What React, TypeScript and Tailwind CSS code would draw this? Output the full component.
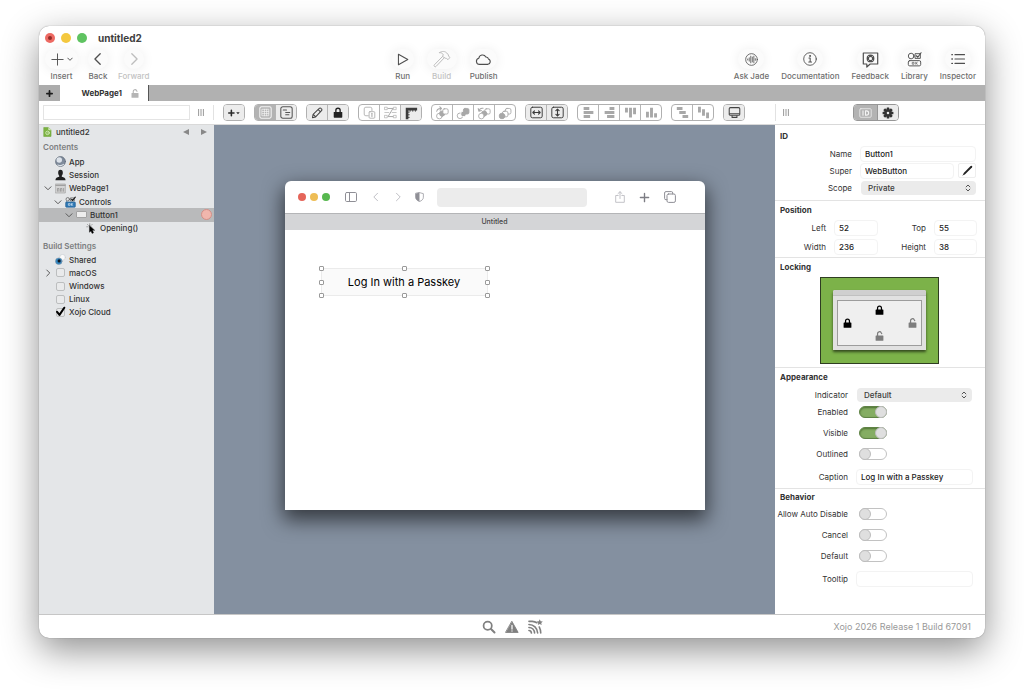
import { useState } from 'react';
import type { ReactNode } from 'react';
import clsx from 'clsx';

interface IconProps {
  className?: string;
}

interface SvgProps extends IconProps {
  box?: string;
  children: ReactNode;
}

function Svg({ box = '0 0 16 16', className, children }: SvgProps) {
  return (
    <svg
      viewBox={box}
      className={className}
      fill="none"
      stroke="currentColor"
      strokeLinecap="round"
      strokeLinejoin="round"
      aria-hidden="true"
    >
      {children}
    </svg>
  );
}

function LockIcon({ open, className }: IconProps & { open?: boolean }) {
  return (
    <Svg box="0 0 16 18" className={className}>
      <rect x="1" y="8" width="14" height="9.5" rx="1" fill="currentColor" stroke="none" />
      <path
        d={open ? 'M4.5 9V5a3.5 3.5 0 0 1 6.6-1.8L12 4.6' : 'M4.5 9V5.5a3.5 3.5 0 0 1 7 0V9'}
        strokeWidth="2.2"
      />
    </Svg>
  );
}

function PlusIcon({ className }: IconProps) {
  return (
    <Svg className={className}>
      <path d="M8 2v12M2 8h12" />
    </Svg>
  );
}

function Chevron({ dir, className }: IconProps & { dir: 'left' | 'right' | 'down' }) {
  const d = { left: 'M10.5 2l-6 6 6 6', right: 'M5.5 2l6 6-6 6', down: 'M2 5.5l6 6 6-6' }[dir];
  return (
    <Svg className={className}>
      <path d={d} />
    </Svg>
  );
}

function GearIcon({ className }: IconProps) {
  return (
    <Svg className={className}>
      <g stroke="none" fill="currentColor">
        {[0, 45, 90, 135].map((a) => (
          <rect key={a} x="6.2" y="0.8" width="3.6" height="14.4" rx="0.6" transform={`rotate(${a} 8 8)`} />
        ))}
        <circle cx="8" cy="8" r="5" />
      </g>
      <circle cx="8" cy="8" r="1.7" fill="#ececec" stroke="none" />
    </Svg>
  );
}

function GripIcon() {
  return (
    <Svg box="0 0 6 7" className="h-[7px] w-[6px] text-[#8d8d8d]">
      <path d="M.6 0v7M3 0v7M5.4 0v7" strokeWidth=".9" strokeLinecap="butt" />
    </Svg>
  );
}

/* ---------- header ---------- */

interface ActionProps {
  label: string;
  disabled?: boolean;
  width?: string;
  children: ReactNode;
}

function Action({ label, disabled, width = 'w-[26px]', children }: ActionProps) {
  return (
    <button
      type="button"
      disabled={disabled}
      className={clsx(
        'flex flex-col items-center text-[8px] leading-[10px] font-medium',
        disabled ? 'text-[#c2c2c2]' : 'text-[#6e6e6e]'
      )}
    >
      <span
        className={clsx(
          'flex h-5 items-center justify-center rounded-full bg-[#fbfbfb] shadow-[0_1px_12px_rgba(0,0,0,0.08)]',
          disabled ? 'text-[#bdbdbd]' : 'text-[#4f4f4f]',
          width
        )}
      >
        {children}
      </span>
      <span className="mt-[2px] whitespace-nowrap">{label}</span>
    </button>
  );
}

function Header() {
  return (
    <header className="flex h-[59px] flex-col">
      <div className="flex h-[23px] items-center gap-[6px] pl-[6px]">
        <span className="flex size-[10px] items-center justify-center rounded-full bg-[#ed6a63]">
          <span className="size-[4px] rounded-full bg-[#8f2c28]" />
        </span>
        <span className="size-[10px] rounded-full bg-[#f4c83f]" />
        <span className="size-[10px] rounded-full bg-[#5fc361]" />
        <h1 className="ml-[5px] text-[10px] leading-[12px] font-bold text-[#404040]">untitled2</h1>
      </div>
      <div className="flex justify-between pr-[9px] pl-[6px]">
        <div className="flex gap-[10px]">
          <Action label="Insert" width="w-[33px]">
            <PlusIcon className="size-[15px]" />
            <Chevron dir="down" className="ml-[2px] size-[6px] stroke-[2.5]" />
          </Action>
          <Action label="Back" width="w-[20px]">
            <Chevron dir="left" className="size-[14px] stroke-[1.5]" />
          </Action>
          <Action label="Forward" width="w-[20px]" disabled>
            <Chevron dir="right" className="size-[14px] stroke-[1.5]" />
          </Action>
        </div>
        <div className="flex gap-[13px] pl-[6px]">
          <Action label="Run" width="w-[22px]">
            <Svg className="size-[13px]">
              <path d="M3 1.5v13L14.5 8z" strokeWidth="1.3" />
            </Svg>
          </Action>
          <Action label="Build" width="w-[30px]" disabled>
            <Svg box="0 0 18 18" className="size-[18px]">
              <path
                d="M9.4 6.6L1.4 14.8a1.1 1.1 0 0 0 1.7 1.6L11 8.1M6.6 2.6c2.8-1.9 5.6-1.3 7.2.4l1.6 1.9.1 1.3 1.5 1.2-2 2.3-1.6-1.3-1.2-.2-1.2-.9-1.6-.7.9-1.8C9.5 3.2 8.4 2.7 6.6 2.6z"
                strokeWidth="1"
              />
            </Svg>
          </Action>
          <Action label="Publish" width="w-[27px]">
            <Svg box="0 0 18 14" className="h-[13px] w-[17px]">
              <path
                d="M5 12.3h8.4a3 3 0 0 0 .9-5.8 2.6 2.6 0 0 0-2.8-2.2A4 4 0 0 0 4 5.6a3.4 3.4 0 0 0 1 6.7z"
                strokeWidth="1.2"
              />
            </Svg>
          </Action>
        </div>
        <div className="flex gap-[12px]">
          <Action label="Ask Jade">
            <Svg className="size-[13px]">
              <circle cx="8" cy="8" r="7.2" />
              <path d="M3.3 7.4v1.2M5.2 6v4M7.1 3.9v8.2M9 5v6M10.9 3.9v8.2M12.7 7v2" />
            </Svg>
          </Action>
          <Action label="Documentation">
            <Svg className="size-[14px]">
              <circle cx="8" cy="8" r="7.2" />
              <path d="M6.8 6.9H8.2v4.4M6.6 11.4h3.2" strokeWidth="1.2" />
              <circle cx="8" cy="4.5" r=".6" fill="currentColor" />
            </Svg>
          </Action>
          <Action label="Feedback">
            <Svg box="0 0 17 17" className="size-[17px]">
              <path d="M1.3 2h14.4v11H8.2l-3.4 3v-3H1.3z" strokeWidth="1.2" />
              <circle cx="8.5" cy="7.4" r="2.7" strokeWidth="2.4" />
              <path
                d="M5.8 4.7l1.5 1.5M11.2 4.7L9.7 6.2M5.8 10.1l1.5-1.5M11.2 10.1L9.7 8.6"
                stroke="#fff"
                strokeWidth=".6"
              />
            </Svg>
          </Action>
          <Action label="Library">
            <Svg className="size-[15px]">
              <circle cx="4.4" cy="4.3" r="3" />
              <rect x="9" y="1.8" width="5.2" height="5" />
              <path d="M10 4l1.5 1.6L15 .8" strokeWidth="1.2" />
              <rect x="1.4" y="9.2" width="13.2" height="5.6" rx="1.5" />
              <path d="M6 11h1.5v2H6zM9.3 11v2M11 11l-1.4 1 1.4 1" strokeWidth=".7" />
            </Svg>
          </Action>
          <Action label="Inspector">
            <Svg className="size-[14px]">
              <path d="M4.5 3h11M4.5 8h11M4.5 13h11" strokeWidth="1.2" />
              <path d="M1 3h.6M1 8h.6M1 13h.6" strokeWidth="1.6" />
            </Svg>
          </Action>
        </div>
      </div>
    </header>
  );
}

function TabBar() {
  return (
    <div className="flex h-[16px] items-stretch bg-[#b1b1b1]">
      <button
        type="button"
        aria-label="New tab"
        className="flex w-[21px] items-center justify-center bg-[#acacac] text-[#1c1c1c]"
      >
        <PlusIcon className="size-[7px] stroke-[4]" />
      </button>
      <button
        type="button"
        className="flex w-[89px] items-center justify-end gap-[9px] border-r border-[#555] bg-white pr-[9px] text-[8px] leading-[10px] font-bold text-[#333]"
      >
        WebPage1
        <LockIcon open className="h-[9px] w-[8px] text-[#b5b5b5]" />
      </button>
    </div>
  );
}

/* ---------- editor toolbar ---------- */

interface Tool {
  label: string;
  icon: ReactNode;
  look?: 'plain' | 'raised' | 'pressed';
}

function Bars({ d }: { d: string }) {
  return (
    <Svg className="size-[13px]">
      <path d={d} strokeWidth="3.6" strokeLinecap="butt" />
    </Svg>
  );
}

const TOOL_GROUPS: Tool[][] = [
  [
    {
      label: 'Add',
      look: 'raised',
      icon: (
        <Svg className="size-[14px] text-[#2b2b2b]">
          <path d="M5 5v6M2 8h6" strokeWidth="1.8" />
          <path d="M10.5 7h4l-2 2.4z" fill="currentColor" stroke="none" />
        </Svg>
      ),
    },
  ],
  [
    {
      label: 'Layout',
      look: 'pressed',
      icon: (
        <Svg className="size-[13px] text-[#f4f4f4]">
          <rect x="1" y="1" width="14" height="14" rx="2" strokeWidth="1.3" />
          <path d="M4 4h8v8H4zM6.7 4v8M9.4 4v8M4 6.7h8M4 9.4h8" strokeWidth=".9" />
        </Svg>
      ),
    },
    {
      label: 'Code',
      look: 'raised',
      icon: (
        <Svg className="size-[13px] text-[#555]">
          <rect x="1" y="1" width="14" height="14" rx="2.5" strokeWidth="1.3" />
          <path d="M4 5h4M7 8h5M7 10.8h4" strokeWidth="1.3" />
        </Svg>
      ),
    },
  ],
  [
    {
      label: 'Edit',
      look: 'raised',
      icon: (
        <Svg className="size-[12px] text-[#444]">
          <path
            d="M2 14.2l.8-4.4L11 1.8a1.6 1.6 0 0 1 2.4 0l.6.6a1.6 1.6 0 0 1 0 2.4l-7.8 8.4zM9.6 3.4l3 3M3 10l3 2.9"
            strokeWidth="1.4"
          />
        </Svg>
      ),
    },
    {
      label: 'Lock',
      look: 'raised',
      icon: <LockIcon className="h-[11px] w-[10px] text-[#222]" />,
    },
  ],
  [
    {
      label: 'Select parent',
      icon: (
        <Svg className="size-[13px]">
          <path d="M6.5 12H3.5A2 2 0 0 1 1.5 10V3.5a2 2 0 0 1 2-2H9a2 2 0 0 1 2 2V6" />
          <rect x="7.5" y="7" width="7" height="8" rx="1" />
          <path d="M11 9v4" strokeWidth="1.3" />
        </Svg>
      ),
    },
    {
      label: 'Tab order',
      icon: (
        <Svg className="size-[13px]">
          <path d="M5 3h6L5 13h6" strokeWidth="1.2" />
          <path d="M1 1.5h3v3H1zM12 1.5h3v3h-3zM1 11.5h3v3H1zM12 11.5h3v3h-3zM1 8h5M10 8h5" strokeWidth=".8" />
        </Svg>
      ),
    },
    {
      label: 'Rulers',
      look: 'raised',
      icon: (
        <Svg className="size-[14px] text-[#3c3c3c]">
          <path d="M3.5 15V3.5H15" strokeWidth="3" strokeLinecap="butt" strokeLinejoin="miter" />
          <path d="M5 7h1M5 10h1M5 13h1M7 5v1M10 5v1M13 5v1" />
        </Svg>
      ),
    },
  ],
  [
    {
      label: 'Bring forward',
      icon: (
        <Svg className="size-[14px]">
          <circle cx="5" cy="11.5" r="3.2" />
          <circle cx="8.2" cy="8.6" r="3" fill="currentColor" />
          <rect x="9" y="3.2" width="6" height="6" rx="1.6" fill="#fff" />
          <path d="M2 6a4 4 0 0 1 5-3M5.5 1L7.4 2.8 5.8 4.8" strokeWidth="1.2" />
        </Svg>
      ),
    },
    {
      label: 'Bring to front',
      icon: (
        <Svg className="size-[14px]">
          <circle cx="4.6" cy="11.2" r="3.2" />
          <rect x="5.5" y="6" width="6" height="6" rx="2" fill="currentColor" stroke="#fff" />
          <rect x="8.4" y="2.8" width="6.4" height="6.4" rx="1.8" fill="currentColor" />
        </Svg>
      ),
    },
    {
      label: 'Send backward',
      icon: (
        <Svg className="size-[14px]">
          <rect x="9" y="3.2" width="6" height="6" rx="1.6" />
          <circle cx="8.2" cy="8.6" r="3" fill="currentColor" />
          <circle cx="5" cy="11.5" r="3.2" fill="#fff" />
          <path d="M2.4 5.6A4 4 0 0 1 7 2.6M1.4 3l.8 3L5 5.2" strokeWidth="1.2" />
        </Svg>
      ),
    },
    {
      label: 'Send to back',
      icon: (
        <Svg className="size-[14px]">
          <rect x="8.4" y="2.8" width="6.4" height="6.4" rx="1.8" />
          <rect x="5" y="6" width="6.4" height="6.4" rx="2" fill="#fff" />
          <circle cx="4.6" cy="11.4" r="3.2" fill="currentColor" />
        </Svg>
      ),
    },
  ],
  [
    {
      label: 'Fill width',
      look: 'raised',
      icon: (
        <Svg className="size-[13px] text-[#3c3c3c]">
          <rect x="1" y="1.5" width="14" height="13" rx="2" strokeWidth="1.2" />
          <path d="M3.5 8h9M5.5 6l-2 2 2 2M10.5 6l2 2-2 2" strokeWidth="1.4" />
        </Svg>
      ),
    },
    {
      label: 'Fill height',
      look: 'raised',
      icon: (
        <Svg className="size-[13px] text-[#3c3c3c]">
          <rect x="1" y="1.5" width="14" height="13" rx="2" strokeWidth="1.2" />
          <path d="M8 3.8v8.4M6 5.8l2-2 2 2M6 10.2l2 2 2-2" strokeWidth="1.4" />
        </Svg>
      ),
    },
  ],
  [
    { label: 'Align left', icon: <Bars d="M2 3h7M2 8h12M2 13h8" /> },
    { label: 'Align right', icon: <Bars d="M8 3h6M2 8h12M5 13h9" /> },
    { label: 'Align top', icon: <Bars d="M3 2v6M8 2v12M13 2v8" /> },
    { label: 'Align bottom', icon: <Bars d="M3 7v7M8 2v12M13 9v5" /> },
  ],
  [
    { label: 'Space vertically', icon: <Bars d="M1 3h7M4 8h8M8 13h7" /> },
    { label: 'Space horizontally', icon: <Bars d="M3 1v7M8 4v8M13 8v7" /> },
  ],
  [
    {
      label: 'Preview device',
      look: 'raised',
      icon: (
        <Svg className="size-[13px] text-[#444]">
          <rect x="1.5" y="2" width="13" height="9.5" rx="1.5" strokeWidth="1.3" />
          <path d="M5 12v2h6v-2M2 9.5h12" strokeWidth="1.3" />
        </Svg>
      ),
    },
  ],
];

function ToolGroup({ tools }: { tools: Tool[] }) {
  return (
    <div className="flex h-[17px] divide-x divide-[#b5b5b5] overflow-hidden rounded-[4px] border border-[#b0b0b0]">
      {tools.map((tool) => (
        <button
          key={tool.label}
          type="button"
          aria-label={tool.label}
          className={clsx(
            'flex w-[21px] items-center justify-center text-[#a8a8a8] last:w-[20px]',
            tool.look === 'raised' && 'bg-[#ececec]',
            tool.look === 'pressed' && 'bg-[#b3b3b3]'
          )}
        >
          {tool.icon}
        </button>
      ))}
    </div>
  );
}

function ToolRow() {
  return (
    <div className="flex h-[24px] items-center border-b border-[#d9d9d9]">
      <div className="flex w-[175px] items-center gap-[8px] border-r border-[#e2e2e2] pl-[4px]">
        <input
          type="search"
          aria-label="Filter"
          className="h-[15px] w-[147px] border border-[#e4e4e4] bg-white px-1 text-[8px] outline-none"
        />
        <GripIcon />
      </div>
      <div className="flex flex-1 gap-[9px] pl-[9px]">
        {TOOL_GROUPS.map((tools) => (
          <ToolGroup key={tools[0].label} tools={tools} />
        ))}
      </div>
      <div className="grid w-[210px] grid-cols-[1fr_auto_1fr] items-center border-l border-[#e2e2e2] pr-[17px] pl-[7px]">
        <GripIcon />
        <div className="flex h-[17px] overflow-hidden rounded-[4px] border border-[#979797]">
          <button
            type="button"
            aria-label="ID"
            className="flex w-[23px] items-center justify-center bg-[#b3b3b3] text-[#f4f4f4]"
          >
            <Svg box="0 0 18 14" className="h-[10px] w-[13px]">
              <rect x="1" y="1" width="16" height="12" rx="1.5" />
              <path d="M5.5 4v6M9 4v6h1.4a3 3 0 0 0 0-6z" strokeWidth="1.5" />
            </Svg>
          </button>
          <button
            type="button"
            aria-label="Settings"
            className="flex w-[21px] items-center justify-center border-l border-[#979797] bg-[#ececec] text-[#333]"
          >
            <GearIcon className="size-[12px]" />
          </button>
        </div>
      </div>
    </div>
  );
}

/* ---------- navigator ---------- */

function AppGlyph() {
  return (
    <Svg className="size-[11px]">
      <circle cx="8" cy="8" r="7.2" fill="#7f8b9b" stroke="#5f6a78" />
      <ellipse cx="6.2" cy="5.8" rx="4" ry="4" fill="#dde3ea" stroke="none" />
      <path d="M4 13c2 1.5 6 1.5 8.5-1" stroke="#e8edf2" strokeWidth="1.5" />
    </Svg>
  );
}

function SessionGlyph() {
  return (
    <Svg className="size-[12px]">
      <path
        d="M8 .5C5.6.5 4.6 2.4 4.6 4.8c0 1.900.7 3.700 1.700 4.500L6 10.700C3 11.400.800 12.200.600 15.500h14.800c-.200-3.300-2.400-4.100-5.400-4.800l-.300-1.400c1-.8 1.700-2.600 1.700-4.500C11.400 2.400 10.400.5 8 .5z"
        fill="#1f1f1f"
        stroke="none"
      />
    </Svg>
  );
}

function PageGlyph() {
  return (
    <Svg className="size-[11px]">
      <rect x="1" y="1.5" width="14" height="13" fill="#d4d4d4" stroke="#a0a0a0" />
      <path d="M1.5 3.5h13" stroke="#a0a0a0" strokeWidth="2" />
      <path d="M3.5 12V8h2.2v4M8 12V8h2v4M12.5 8v4" stroke="#888" />
    </Svg>
  );
}

function ControlsGlyph() {
  return (
    <Svg className="size-[12px]">
      <circle cx="4" cy="4" r="2.5" stroke="#555" />
      <path d="M8.5 2h5v4.5h-5z" stroke="#555" />
      <path d="M9.500 4l1.500 1.600L15 .8" stroke="#111" strokeWidth="1.5" />
      <rect x="1" y="8" width="14" height="7.5" rx="1" fill="#2c77b5" stroke="#2a6393" />
      <path d="M5.500 10.400h2v2.400h-2zM9.500 10.200v2.800M11.500 10.200l-1.800 1.400 1.800 1.400" stroke="#fff" strokeWidth=".8" />
    </Svg>
  );
}

function ButtonGlyph() {
  return <span className="h-[7px] w-[11px] rounded-[1px] border border-[#a3a3a3] bg-[#ededed]" />;
}

function EventGlyph() {
  return (
    <Svg className="size-[11px]">
      <path d="M2 2l1.5 1.5M5.5.8v2M1 5.5h2M9 2L7.8 3.3" stroke="#888" />
      <path d="M5 3.5v10l2.3-2 1.500 3.800 2.200-1-1.600-3.600h3z" fill="#000" stroke="#000" strokeWidth=".5" />
    </Svg>
  );
}

function SharedGlyph() {
  return (
    <Svg className="size-[11px]">
      <circle cx="11" cy="4.800" r="4.200" fill="#fafafa" stroke="#c8ccd0" />
      <circle cx="5.500" cy="10.500" r="4.800" fill="#2f86c4" stroke="#8a959e" strokeWidth=".8" />
      <circle cx="6" cy="10" r="2.300" fill="#101820" stroke="none" />
    </Svg>
  );
}

interface NodeProps {
  label: string;
  pad: string;
  icon: ReactNode;
  arrow?: 'right' | 'down';
  selected?: boolean;
}

function TreeNode({ label, pad, icon, arrow, selected }: NodeProps) {
  return (
    <li className={clsx('flex min-h-0 flex-1 items-center pr-[2px]', pad, selected && 'bg-[#b9babb]')}>
      <button type="button" className="flex flex-1 items-center gap-[3px] text-left">
        <span className="flex w-[9px] justify-center">
          {arrow && <Chevron dir={arrow} className="size-[8px] stroke-2 text-[#5a5a5a]" />}
        </span>
        <span className="flex w-[11px] items-center justify-center">{icon}</span>
        {label}
      </button>
      {selected && <span className="size-[11px] rounded-full border border-[#d38f87] bg-[#f0b6ad]" />}
    </li>
  );
}

function BuildTarget({ label, arrow, initial }: { label: string; arrow?: boolean; initial?: boolean }) {
  const [on, setOn] = useState(Boolean(initial));

  return (
    <li className="flex min-h-0 flex-1 items-center gap-[3px] pl-[4px]">
      <span className="flex w-[9px] justify-center">
        {arrow && <Chevron dir="right" className="size-[8px] stroke-2 text-[#5a5a5a]" />}
      </span>
      <label className="relative flex items-center gap-[3px]">
        <span className="flex w-[11px] justify-center">
          <input
            type="checkbox"
            checked={on}
            onChange={(e) => setOn(e.target.checked)}
            className="size-[9px] appearance-none rounded-[2px] border border-[#bcbebf] bg-[#e9eaeb]"
          />
        </span>
        {on && (
          <Svg className="absolute -top-px left-0 size-[11px] text-black">
            <path d="M3 8.5l3.500 4.500L13.500 2.500" strokeWidth="3" />
          </Svg>
        )}
        {label}
      </label>
    </li>
  );
}

function Navigator() {
  return (
    <nav className="w-[175px] bg-[#e4e6e8] text-[8px] leading-[10px] font-medium text-[#333]">
      <div className="flex h-[14px] items-center gap-[4px] pr-[7px] pl-[4px]">
        <Svg box="0 0 14 17" className="h-[10px] w-[9px]">
          <path d="M1 1h8l4 4v11H1z" fill="#7cb342" stroke="#6fa53a" />
          <path d="M9 1v4h4" fill="#d6eabf" stroke="#d6eabf" />
          <circle cx="7" cy="10" r="3" stroke="#e6f3d6" strokeWidth="1.3" />
          <circle cx="7" cy="10" r=".8" fill="#fff" stroke="none" />
        </Svg>
        <span className="flex-1">untitled2</span>
        <button type="button" aria-label="Previous" className="mr-[8px] text-[#888]">
          <Svg box="0 0 6 6" className="size-[6px]">
            <path d="M6 0v6L0 3z" fill="currentColor" stroke="none" />
          </Svg>
        </button>
        <button type="button" aria-label="Next" className="text-[#888]">
          <Svg box="0 0 6 6" className="size-[6px]">
            <path d="M0 0v6l6-3z" fill="currentColor" stroke="none" />
          </Svg>
        </button>
      </div>
      <h2 className="flex h-[16px] items-center pl-[4px] font-semibold text-[#7c7e80]">Contents</h2>
      <ul className="flex h-[80px] flex-col">
        <TreeNode label="App" pad="pl-[4px]" icon={<AppGlyph />} />
        <TreeNode label="Session" pad="pl-[4px]" icon={<SessionGlyph />} />
        <TreeNode label="WebPage1" pad="pl-[4px]" icon={<PageGlyph />} arrow="down" />
        <TreeNode label="Controls" pad="pl-[14px]" icon={<ControlsGlyph />} arrow="down" />
        <TreeNode label="Button1" pad="pl-[25px]" icon={<ButtonGlyph />} arrow="down" selected />
        <TreeNode label="Opening()" pad="pl-[35px]" icon={<EventGlyph />} />
      </ul>
      <h2 className="mt-[3px] flex h-[15px] items-center pl-[4px] font-semibold text-[#7c7e80]">Build Settings</h2>
      <ul className="flex h-[66px] flex-col">
        <TreeNode label="Shared" pad="pl-[4px]" icon={<SharedGlyph />} />
        <BuildTarget label="macOS" arrow />
        <BuildTarget label="Windows" />
        <BuildTarget label="Linux" />
        <BuildTarget label="Xojo Cloud" initial />
      </ul>
    </nav>
  );
}

/* ---------- canvas ---------- */

const HANDLES = [
  '-top-[3px] -left-[3px]',
  '-top-[3px] left-1/2 -ml-[2px]',
  '-top-[3px] -right-[3px]',
  'top-1/2 -left-[3px] -mt-[2px]',
  'top-1/2 -right-[3px] -mt-[2px]',
  '-bottom-[3px] -left-[3px]',
  '-bottom-[3px] left-1/2 -ml-[2px]',
  '-right-[3px] -bottom-[3px]',
];

function Canvas() {
  return (
    <main className="flex flex-1 flex-col items-center bg-[#8490a0] pt-14">
      <div className="flex h-[329px] w-[420px] flex-col rounded-t-[6px] bg-white shadow-[0_8px_20px_2px_rgba(0,0,0,0.6)]">
        <div className="flex h-[32px] items-center pl-[13px] text-[#8f8f96]">
          <div className="flex gap-[4px]">
            <span className="size-[8px] rounded-full bg-[#e5655a]" />
            <span className="size-[8px] rounded-full bg-[#eebd55]" />
            <span className="size-[8px] rounded-full bg-[#57b84f]" />
          </div>
          <Svg box="0 0 12 10" className="ml-[15px] h-[10px] w-[12px]">
            <rect x=".5" y=".5" width="11" height="9" rx="1.2" />
            <path d="M4.5.5v9" />
          </Svg>
          <Chevron dir="left" className="ml-[14px] size-[10px] stroke-[1.5] text-[#bcbcc2]" />
          <Chevron dir="right" className="ml-[12px] size-[10px] stroke-[1.5] text-[#bcbcc2]" />
          <Svg box="0 0 10 11" className="ml-[12px] h-[10px] w-[9px]">
            <path d="M5 .6L9.3 1.8v4C9.3 8 7.5 9.7 5 10.500 2.500 9.700.7 8 .7 5.800v-4z" strokeWidth=".8" />
            <path d="M5 .6v9.900C2.500 9.700.7 8 .7 5.800v-4z" fill="currentColor" stroke="none" />
          </Svg>
          <input
            type="text"
            aria-label="Address"
            className="ml-[13px] h-[19px] w-[150px] rounded-[4px] bg-[#ececec] px-2 text-[8px] outline-none"
          />
          <Svg box="0 0 10 12" className="ml-[28px] h-[12px] w-[10px] text-[#bcbcc2]">
            <path d="M3.2 4.5H.7v6.8h8.600V4.500H6.800M5 7.500V.8M3 2.600L5 .7l2 1.900" strokeWidth=".9" />
          </Svg>
          <PlusIcon className="ml-[14px] size-[11px] stroke-2 text-[#7d7d84]" />
          <Svg box="0 0 12 12" className="ml-[14px] size-[12px]">
            <rect x="3" y="3" width="8.4" height="8.4" rx="1.5" />
            <path d="M3 8.700H2A1.300 1.300 0 0 1 .6 7.400V2A1.400 1.400 0 0 1 2 .6h5.400A1.300 1.300 0 0 1 8.700 2v1" />
          </Svg>
        </div>
        <div className="h-[17px] border-t border-[#b4b5b7] bg-[#d4d5d7] text-center text-[7px] leading-[15px] font-medium text-[#444]">
          Untitled
        </div>
        <div className="relative flex-1">
          <button
            type="button"
            className="absolute top-[38px] left-[36px] h-[28px] w-[167px] border border-[#ebebeb] bg-[#fafafa] text-[11px] leading-[14px] text-black"
          >
            Log In with a Passkey
            {HANDLES.map((place) => (
              <span
                key={place}
                className={clsx('absolute size-[5px] rounded-[1px] border border-[#9a9a9a] bg-white', place)}
              />
            ))}
          </button>
        </div>
      </div>
    </main>
  );
}

/* ---------- inspector ---------- */

function Field({ id, value, className }: { id: string; value: string; className?: string }) {
  return (
    <input
      id={id}
      type="text"
      defaultValue={value}
      className={clsx(
        'h-[16px] min-w-0 rounded-[4px] border border-[#f3f3f3] bg-white px-[4px] text-[8px] font-medium text-[#222] outline-none',
        className
      )}
    />
  );
}

function Popup({ id, options, className }: { id: string; options: string[]; className?: string }) {
  return (
    <div className={clsx('relative h-[14px]', className)}>
      <select
        id={id}
        className="block h-full w-full appearance-none rounded-[4px] bg-[#ebebeb] px-[7px] text-[8px] leading-[14px] font-medium text-[#3c3c3c] outline-none"
      >
        {options.map((option) => (
          <option key={option}>{option}</option>
        ))}
      </select>
      <Svg box="0 0 8 10" className="pointer-events-none absolute top-[3px] right-[5px] h-[8px] w-[6px] text-[#444]">
        <path d="M1.5 3.5L4 1l2.500 2.500M1.500 6.500L4 9l2.500-2.500" strokeWidth="1.2" />
      </Svg>
    </div>
  );
}

interface RowProps {
  id: string;
  label: string;
  narrow?: boolean;
  className?: string;
  children: ReactNode;
}

function Row({ id, label, narrow, className, children }: RowProps) {
  return (
    <div className={clsx('flex h-[17px] items-center', className)}>
      <label
        htmlFor={id}
        className={clsx('mr-[8px] text-right whitespace-nowrap', narrow ? 'w-[73px]' : 'w-[77px]')}
      >
        {label}
      </label>
      {children}
    </div>
  );
}

function Toggle({ id, initial }: { id: string; initial?: boolean }) {
  const [on, setOn] = useState(Boolean(initial));

  return (
    <input
      id={id}
      type="checkbox"
      role="switch"
      checked={on}
      onChange={(e) => setOn(e.target.checked)}
      className="ml-[3px] flex h-[12px] w-[28px] appearance-none items-center rounded-full border border-[#c2c2c2] bg-white before:-ml-px before:size-[12px] before:rounded-full before:border before:border-[#bdbdbd] before:bg-[#dfdfdf] checked:justify-end checked:border-[#5f8245] checked:bg-[#85ad63] checked:shadow-[inset_0_1px_2px_#4d7331] checked:before:-mr-px checked:before:ml-0"
    />
  );
}

interface SectionProps {
  title: string;
  tight?: boolean;
  className?: string;
  children: ReactNode;
}

function Section({ title, tight, className, children }: SectionProps) {
  return (
    <section className={className}>
      <h2 className={clsx('flex items-center pl-[5px] font-bold text-[#333]', tight ? 'h-[16px]' : 'h-[18px]')}>
        {title}
      </h2>
      {children}
    </section>
  );
}

function SideLock({ side, initial, className }: { side: string; initial: boolean; className: string }) {
  const [locked, setLocked] = useState(initial);

  return (
    <button
      type="button"
      aria-label={`Lock ${side}`}
      onClick={() => setLocked(!locked)}
      className={clsx('flex items-center justify-center', locked ? 'text-black' : 'text-[#7d7d7d]', className)}
    >
      <LockIcon open={!locked} className="h-[10px] w-[9px]" />
    </button>
  );
}

function Inspector() {
  return (
    <aside className="w-[210px] bg-white text-[8px] leading-[10px] text-[#333]">
      <Section title="ID" className="border-b border-[#e3e3e3] pt-[2px] pb-[4px]">
        <Row id="name" label="Name">
          <Field id="name" value="Button1" className="mr-[9px] flex-1" />
        </Row>
        <Row id="super" label="Super">
          <Field id="super" value="WebButton" className="flex-1" />
          <button
            type="button"
            aria-label="Edit super"
            className="mr-[9px] ml-[4px] flex h-[15px] w-[18px] items-center justify-center rounded-[2px] border border-[#eee] text-[#222]"
          >
            <Svg className="size-[11px]">
              <path d="M3.5 12.5L13.5 2.500" strokeWidth="2.8" />
              <path d="M1.5 14.500l2.500-2" strokeWidth="1.3" />
            </Svg>
          </button>
        </Row>
        <Row id="scope" label="Scope">
          <Popup id="scope" options={['Private', 'Public', 'Protected']} className="mr-[9px] ml-px flex-1" />
        </Row>
      </Section>
      <Section title="Position" className="border-b border-[#e3e3e3] pb-[2px]">
        <div className="grid grid-cols-[51px_44px_1fr_43px] items-center gap-x-[8px] gap-y-[2px] pr-[8px]">
          {[
            ['Left', '52'],
            ['Top', '55'],
            ['Width', '236'],
            ['Height', '38'],
          ].map(([label, value]) => (
            <div key={label} className="contents">
              <label htmlFor={label} className="text-right">
                {label}
              </label>
              <div className="flex h-[17px] items-center">
                <Field id={label} value={value} className="w-full" />
              </div>
            </div>
          ))}
        </div>
      </Section>
      <Section title="Locking" className="border-b border-[#e3e3e3] pb-[3px]">
        <div className="mt-px ml-[45px] h-[87px] w-[119px] border border-[#2f3d22] bg-[#7cb249] px-[12px] pt-[12px]">
          <div className="flex h-[60px] flex-col rounded-t-[2px] bg-[#e1e1e1] shadow-[0_2px_3px_rgba(0,0,0,0.6)]">
            <div className="h-[6px] rounded-t-[2px] border-b border-[#c0c0c0] bg-[#cfcfcf]" />
            <div className="mx-[4px] mt-[4px] mb-[4px] grid flex-1 grid-cols-3 grid-rows-3 border border-[#9c9c9c] bg-[#efefef] py-[2px]">
              <SideLock side="top" initial className="col-start-2 row-start-1" />
              <SideLock side="left" initial className="col-start-1 row-start-2 justify-start pl-[5px]" />
              <SideLock side="right" initial={false} className="col-start-3 row-start-2 justify-end pr-[4px]" />
              <SideLock side="bottom" initial={false} className="col-start-2 row-start-3" />
            </div>
          </div>
        </div>
      </Section>
      <Section title="Appearance" className="border-b border-[#e3e3e3] pb-[3px]">
        <Row id="indicator" label="Indicator" narrow>
          <Popup id="indicator" options={['Default', 'Primary', 'Secondary']} className="mr-[13px] ml-px flex-1" />
        </Row>
        <div className="flex flex-col gap-[4px]">
          <Row id="enabled" label="Enabled" narrow>
            <Toggle id="enabled" initial />
          </Row>
          <Row id="visible" label="Visible" narrow>
            <Toggle id="visible" initial />
          </Row>
          <Row id="outlined" label="Outlined" narrow>
            <Toggle id="outlined" />
          </Row>
        </div>
        <Row id="caption" label="Caption" narrow className="mt-[6px]">
          <Field id="caption" value="Log In with a Passkey" className="mr-[12px] flex-1" />
        </Row>
      </Section>
      <Section title="Behavior" tight>
        <div className="flex flex-col gap-[4px]">
          <Row id="auto" label="Allow Auto Disable" narrow>
            <Toggle id="auto" />
          </Row>
          <Row id="cancel" label="Cancel" narrow>
            <Toggle id="cancel" />
          </Row>
          <Row id="default" label="Default" narrow>
            <Toggle id="default" />
          </Row>
        </div>
        <Row id="tooltip" label="Tooltip" narrow className="mt-[6px]">
          <Field id="tooltip" value="" className="mr-[12px] flex-1" />
        </Row>
      </Section>
    </aside>
  );
}

function StatusBar() {
  return (
    <footer className="grid h-[24px] grid-cols-[1fr_auto_1fr] items-center border-t border-[#c6c6c6] px-[14px]">
      <span />
      <div className="flex items-center gap-[9px] text-[#808080]">
        <button type="button" aria-label="Search">
          <Svg className="size-[14px]">
            <circle cx="6.5" cy="6.5" r="4.7" strokeWidth="2" />
            <path d="M10.3 10.3l4 4" strokeWidth="2.3" />
          </Svg>
        </button>
        <button type="button" aria-label="Issues">
          <Svg className="size-[14px]">
            <path d="M8 1.8L15 14.2H1z" fill="currentColor" />
            <path d="M8 6v4.3M8 12.5v.2" stroke="#fff" strokeWidth="1.4" />
          </Svg>
        </button>
        <button type="button" aria-label="News">
          <Svg className="size-[15px]">
            <path
              d="M1 2.5h3.5c2 .1 3.5.5 5 1.5M1 5.8c5 0 9 4 9.3 9.200M1 9c3.500 0 5.800 2.800 6 6M1 12.300c1.600 0 2.500 1.200 2.700 2.700M12 8.500c1 2 1.500 4 1.600 6.500"
              strokeWidth="1.7"
            />
            <path
              d="M12.5.2l1 2.2 2.3.2-1.7 1.600.5 2.300-2.100-1.200-2 1.200.4-2.300-1.700-1.600 2.300-.2z"
              fill="currentColor"
              stroke="none"
            />
          </Svg>
        </button>
      </div>
      <span className="text-right text-[9px] leading-[10px] text-[#999]">Xojo 2026 Release 1 Build 67091</span>
    </footer>
  );
}

export default function App() {
  return (
    <div className="flex min-h-screen flex-col bg-white px-[39px] pt-[26px] pb-[52px] font-['Inter','Liberation_Sans',sans-serif]">
      <div className="flex flex-1 flex-col overflow-hidden rounded-[10px] bg-white shadow-[0_0_1px_rgba(0,0,0,0.5),0_12px_36px_rgba(0,0,0,0.44)]">
        <Header />
        <TabBar />
        <ToolRow />
        <div className="flex flex-1">
          <Navigator />
          <Canvas />
          <Inspector />
        </div>
        <StatusBar />
      </div>
    </div>
  );
}
